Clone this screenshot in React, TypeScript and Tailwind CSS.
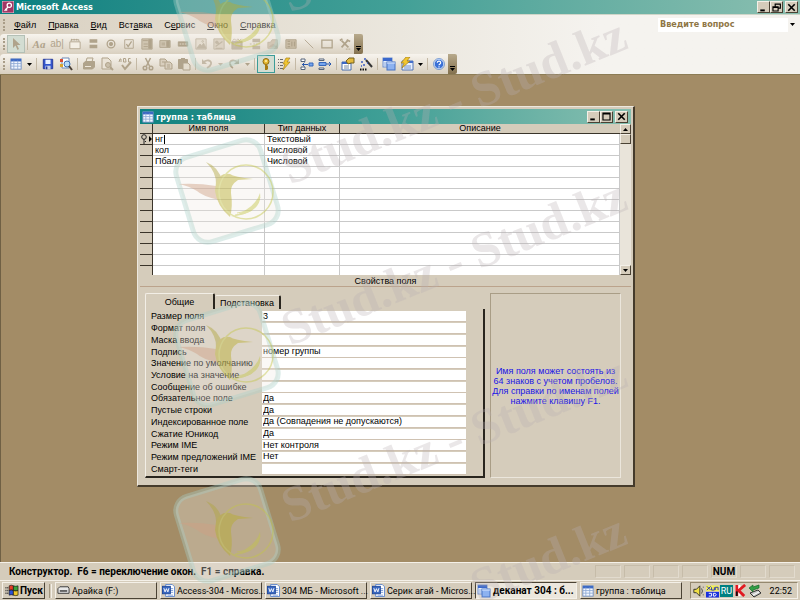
import type { ReactNode } from "react";

const raised =
  "border border-t-[#f4f0e8] border-l-[#f4f0e8] border-r-[#4a4234] border-b-[#4a4234] bg-[#d5ccbb]";

const MENU = [
  ["", "Ф", "айл"],
  ["", "П", "равка"],
  ["", "В", "ид"],
  ["Вст", "а", "вка"],
  ["С", "е", "рвис"],
  ["", "О", "кно"],
  ["", "С", "правка"],
];

const FIELDS = [
  { name: "нг", type: "Текстовый" },
  { name: "кол", type: "Числовой" },
  { name: "Пбалл", type: "Числовой" },
];

const PROPS = [
  ["Размер поля", "3"],
  ["Формат поля", ""],
  ["Маска ввода", ""],
  ["Подпись", "номер группы"],
  ["Значение по умолчанию", ""],
  ["Условие на значение", ""],
  ["Сообщение об ошибке", ""],
  ["Обязательное поле", "Да"],
  ["Пустые строки", "Да"],
  ["Индексированное поле", "Да (Совпадения не допускаются)"],
  ["Сжатие Юникод", "Да"],
  ["Режим IME", "Нет контроля"],
  ["Режим предложений IME", "Нет"],
  ["Смарт-теги", ""],
];

function Svg({ children, className = "w-[14px] h-[14px]" }: { children: ReactNode; className?: string }) {
  return (
    <svg viewBox="0 0 14 14" className={`shrink-0 ${className}`} fill="none" stroke="currentColor" aria-hidden="true">
      {children}
    </svg>
  );
}

function TableIcon() {
  return (
    <Svg className="w-3 h-3">
      <rect x="1" y="1" width="12" height="12" fill="#f4f8ff" stroke="#6a8ac0" />
      <path d="M1 2.500h12" stroke="#3d6ac4" strokeWidth="3" />
      <path d="M4.500 3v10M9 3v10M1 6.500h12M1 9.500h12" stroke="#8fabd6" />
    </Svg>
  );
}

function WordIcon() {
  return (
    <Svg className="w-[13px] h-[13px]">
      <path d="M4 .5h7l2.500 2.500v10.500H4z" fill="#fff" stroke="#5e86cc" />
      <path d="M9 5h3M9 7h3M9 9h3M6 12h6" stroke="#7c9cd6" />
      <rect x=".5" y="2.500" width="8.500" height="8" fill="#3b68c0" stroke="#204a9c" />
      <path d="M2 4.500l1.300 4L4.800 5l1.500 3.500 1.200-4" stroke="#fff" />
    </Svg>
  );
}

function DbIcon() {
  return (
    <Svg>
      <rect x="1" y="1" width="9" height="9" fill="#e6effc" stroke="#6c8fd0" />
      <path d="M1 2.500h9" stroke="#3a68cc" strokeWidth="3" />
      <path d="M2 6h3M2 8h3" stroke="#8caade" />
      <rect x="5" y="5" width="8" height="8" fill="#8db2f0" stroke="#4673c4" />
      <path d="M5 6h8" stroke="#dce8ff" />
    </Svg>
  );
}

function CloseIcon() {
  return (
    <Svg className="w-[9px] h-[9px] text-black">
      <path d="M2 2l10 10M12 2L2 12" strokeWidth="2.500" />
    </Svg>
  );
}

function MinIcon() {
  return (
    <Svg className="w-[9px] h-[9px] text-black">
      <path d="M2 11.500h7" strokeWidth="3" />
    </Svg>
  );
}

function Caret() {
  return (
    <svg viewBox="0 0 5 3" className="w-[5px] h-[3px] shrink-0" aria-hidden="true">
      <path d="M0 0h5L2.500 3z" fill="currentColor" />
    </svg>
  );
}

function ToolButton({ label, active, children }: { label: string; active?: string; children: ReactNode }) {
  return (
    <button
      type="button"
      aria-label={label}
      className={`w-[18px] h-[18px] shrink-0 flex items-center justify-center ${
        active ? `border bg-[#d3ddd2] ${active}` : ""
      }`}
    >
      {children}
    </button>
  );
}

function Drop({ label }: { label: string }) {
  return (
    <button type="button" aria-label={label} className="w-[9px] h-[18px] shrink-0 flex items-center justify-center">
      <Caret />
    </button>
  );
}

function Sep() {
  return <span className="w-px h-3 mx-0.5 shrink-0 bg-[#c4b9a5]" />;
}

function Grip() {
  return (
    <span className="w-[7px] shrink-0 flex items-center justify-center">
      <span className="h-3 border-l-2 border-dotted border-[#a99d88]" />
    </span>
  );
}

function Overflow({ label }: { label: string }) {
  return (
    <button
      type="button"
      aria-label={label}
      className="w-[9px] self-stretch rounded-r-xs flex flex-col items-center justify-end gap-px pb-[3px] bg-linear-to-b from-[#b8aa8c] to-[#84714e] text-black"
    >
      <span className="w-[5px] h-px bg-black" />
      <Caret />
    </button>
  );
}

const controls: [string, ReactNode][] = [
  ["Поле", <><path d="M2.500 4V2h9v2" /><path d="M1 4.500h12v8H1z" fill="#f4efe5" /><path d="M3 1v2M6 1v2M9 1v2" /></>],
  ["Выключатель", <><path d="M3 3.500h9M3 10h9" strokeWidth="4" /><path d="M3 6.500h9" stroke="#eee8db" /></>],
  ["Переключатель", <><circle cx="7" cy="7" r="4.500" strokeWidth="1.500" /><circle cx="7" cy="7" r="2" fill="currentColor" /></>],
  ["Флажок", <><path d="M2 2h10v10H2z" /><path d="M4 7l2 3 4-6" strokeWidth="1.500" /></>],
  ["Поле со списком", <><path d="M1 1h12v12H1z" fill="#cfc4b0" /><path d="M2 3h6M3 7h5M3 10h5" /><path d="M9 2h3v10H9z" fill="currentColor" /></>],
  ["Список", <><path d="M1 3h12v8H1z" fill="#cfc4b0" /><path d="M3 6h4M3 8h4" /><path d="M9 4h3v6H9z" fill="currentColor" /></>],
  ["Кнопка", <><path d="M1.500 4.500h11v5h-11z" fill="currentColor" /><path d="M3 7h8" stroke="#e8e0d0" strokeDasharray="2 1" /></>],
  ["Рисунок", <><path d="M1 1h12v12H1z" fill="#e0d8c8" /><path d="M2 12l4-5 2 2 2-3 3 6z" fill="currentColor" /><circle cx="9" cy="4" r="1" /></>],
  ["Свободная рамка", <><path d="M1 1h12v12H1z" fill="#d3c8b4" /><path d="M3 10l8-6M4 4l3 3M3 12h8" strokeWidth="1.500" /><circle cx="4.500" cy="5" r="1.500" fill="currentColor" /></>],
  ["Присоединенная рамка", <><path d="M1 4h12v9H1z" fill="currentColor" /><path d="M2 3l2-2 2 2 2-2 2 2 2-2M3 11l3-4 2 3 3-4" stroke="#b8a98e" /><path d="M3 7h8" stroke="#e0d7c6" /></>],
  ["Конец страницы", <><path d="M4 3h9M4 11h9" strokeWidth="4" /><path d="M1 7h2M5 7h8" strokeDasharray="2 1" /></>],
  ["Вкладки", <><path d="M1 5h3l2-3h6v10H1z" fill="#c4b69e" /><path d="M3 10l4-3 4 3z" fill="currentColor" /></>],
  ["Подчиненная форма", <><path d="M1 2h12v10H1z" fill="#cabda6" /><path d="M3 4h3M3 7h3M3 10h3M8 4v6M11 4v6" strokeWidth="1.500" /></>],
  ["Линия", <path d="M2 2l10 10" />],
  ["Прямоугольник", <path d="M1 2.500h12v9H1z" strokeWidth="1.500" />],
  ["Другие элементы", <><path d="M3 11l7-8M3 3l8 8" strokeWidth="2" /><path d="M1 3l3-2M9 2l4 2" strokeWidth="2" /><path d="M8 13h5" strokeDasharray="1 1" strokeWidth="1.500" /></>],
];

function ControlsToolbar() {
  return (
    <div className="w-fit h-5 flex items-center rounded-sm bg-linear-to-b from-[#f7f4ee] to-[#d9d0c0] text-[#b0a38b]">
      <Grip />
      <ToolButton label="Выбор объектов" active="border-[#b4c0b6]">
        <Svg><path d="M4 1v10l2.500-2.500L8.500 13l1.500-1-2-4h3.500z" fill="currentColor" stroke="none" /></Svg>
      </ToolButton>
      <Sep />
      <button type="button" className="w-[18px] text-[11px] leading-3 font-bold italic font-['Liberation_Serif',serif]">Aa</button>
      <button type="button" className="w-[18px] text-[10px] leading-3 font-['Liberation_Sans',sans-serif]">ab|</button>
      {controls.map(([label, icon]) => (
        <ToolButton key={label} label={label}>
          <Svg className="w-3 h-3">{icon}</Svg>
        </ToolButton>
      ))}
      <Overflow label="Параметры панели элементов" />
    </div>
  );
}

function DesignToolbar() {
  return (
    <div className="w-fit h-5 flex items-center rounded-sm bg-linear-to-b from-[#f7f4ee] to-[#d9d0c0] text-[#b0a38b]">
      <Grip />
      <ToolButton label="Вид"><TableIcon /></ToolButton>
      <span className="text-black"><Drop label="Выбрать вид" /></span>
      <Sep />
      <ToolButton label="Сохранить">
        <Svg className="w-3 h-3">
          <path d="M1.500 1.500h11v11h-11z" fill="#3355cc" stroke="#1c2f94" />
          <path d="M4 2h6v5H4z" fill="#e8f0ff" stroke="none" />
          <path d="M4 9h6v4H4z" fill="#c6cfe8" stroke="none" />
          <path d="M5.500 10v3" stroke="#1c2f94" strokeWidth="1.500" />
        </Svg>
      </ToolButton>
      <ToolButton label="Поиск файлов">
        <Svg>
          <path d="M3 1h7v10H3z" fill="#fff" stroke="#6c89b8" />
          <path d="M1 2h3v3H1z" fill="#d84b34" stroke="none" />
          <path d="M1 7h3v3H1z" fill="#d9a52f" stroke="none" />
          <circle cx="8" cy="7" r="3" fill="#b9dcf8" stroke="#3c6fb4" />
          <path d="M10 9l3 4" stroke="#4c4238" strokeWidth="2" />
        </Svg>
      </ToolButton>
      <Sep />
      <ToolButton label="Печать">
        <Svg>
          <path d="M4 5l1-4h6l-1 4" fill="#efe9dd" />
          <path d="M1.500 6l2-1.500h9V10l-2 2h-9z" fill="currentColor" />
          <path d="M3 9.500h6" stroke="#eee7da" />
        </Svg>
      </ToolButton>
      <ToolButton label="Просмотр">
        <Svg>
          <path d="M2 1h6l3 3v8H2z" fill="#eae3d6" />
          <circle cx="8" cy="8" r="2.500" fill="#cabfab" />
          <path d="M10 10l3 3" strokeWidth="2" />
        </Svg>
      </ToolButton>
      <ToolButton label="Орфография">
        <Svg>
          <path d="M1 5l1-3h1v3M5.500 5V1.500H7.500L8 5H5.500M12.500 1.500h-2V5h2" />
          <path d="M4 8l3 4 6-7" strokeWidth="2" />
        </Svg>
      </ToolButton>
      <Sep />
      <ToolButton label="Вырезать">
        <Svg>
          <path d="M4.500 1l4 8M9.500 1l-4 8" strokeWidth="1.500" />
          <circle cx="4" cy="11" r="1.800" strokeWidth="1.500" />
          <circle cx="10" cy="11" r="1.800" strokeWidth="1.500" />
        </Svg>
      </ToolButton>
      <ToolButton label="Копировать">
        <Svg>
          <path d="M1 2h5l2 2v5H1z" fill="#d8cebd" />
          <path d="M6 5h5l2 2v5H6z" fill="#d8cebd" />
          <path d="M3 5h3M8 8h3M8 10h3" />
        </Svg>
      </ToolButton>
      <ToolButton label="Вставить">
        <Svg>
          <path d="M1.500 2.500h9v9h-9z" fill="currentColor" />
          <path d="M4 2h4" strokeWidth="2" />
          <path d="M6 6h5l2 2v5H6z" fill="#e4dccd" />
        </Svg>
      </ToolButton>
      <Sep />
      <ToolButton label="Отменить">
        <Svg>
          <path d="M3 6c3-4 9-3 8 1-.5 2-2 3-4 4" strokeWidth="1.800" />
          <path d="M2 2v5h5z" fill="currentColor" stroke="none" />
        </Svg>
      </ToolButton>
      <Drop label="Список отмены" />
      <ToolButton label="Вернуть">
        <Svg>
          <path d="M11 6C8 2 2 3 3 7c.5 2 1 3 3 4" strokeWidth="1.800" />
          <path d="M12 2v5H7z" fill="currentColor" stroke="none" />
        </Svg>
      </ToolButton>
      <Drop label="Список возврата" />
      <Sep />
      <ToolButton label="Ключевое поле" active="border-[#3b9c98]">
        <Svg>
          <circle cx="7" cy="4.500" r="3" fill="#e8bc36" stroke="#8b6914" />
          <path d="M7 7v6M7 9.500h2M7 11.500h2" stroke="#a67c14" strokeWidth="2" />
          <circle cx="7" cy="4" r="1" fill="#fff3b0" stroke="none" />
        </Svg>
      </ToolButton>
      <ToolButton label="Индексы">
        <Svg>
          <path d="M1 2.500h5M1 5.500h5M1 8.500h5M1 11.500h5" stroke="#6b6b6b" strokeDasharray="1 1 3 0" />
          <path d="M9 1h4l-3 4h3L6 13l2-6H6z" fill="#f2c62e" stroke="#a88222" strokeWidth=".7" />
        </Svg>
      </ToolButton>
      <Sep />
      <ToolButton label="Добавить строки">
        <Svg>
          <path d="M1 2h4v2.500H1zM1 10h4v2.500H1z" fill="#fff" stroke="#56657a" />
          <path d="M9 6h4v3H9z" fill="#77a6ee" stroke="#3668bb" />
          <path d="M8 7.500H2M4.500 5.500l-2 2 2 2" stroke="#2857ac" />
        </Svg>
      </ToolButton>
      <ToolButton label="Удалить строки">
        <Svg>
          <path d="M1 2h5v1.500H1zM1 11h5v1.500H1z" fill="#fff" stroke="#56657a" />
          <path d="M1 5.500h7v3H1z" fill="#77a6ee" stroke="#3668bb" />
          <path d="M8 7h5M11 5l2 2-2 2" stroke="#2857ac" />
        </Svg>
      </ToolButton>
      <Sep />
      <ToolButton label="Свойства">
        <Svg>
          <path d="M1 5h9v8H1z" fill="#fff" stroke="#476dae" />
          <path d="M1 6h9" stroke="#3a66c6" strokeWidth="2" />
          <path d="M3 9h5M3 11h5" stroke="#7b8ca5" />
          <path d="M5 4l3-3h5v5h-3L7 7z" fill="#e3b93d" stroke="#74601e" />
        </Svg>
      </ToolButton>
      <ToolButton label="Построить">
        <Svg>
          <path d="M7 3l6 7" stroke="#333" strokeWidth="2" />
          <path d="M2 5h2M5 2h2M4 8h2M8 6h1M2 9h1" stroke="#3e5dc1" strokeWidth="1.500" />
          <path d="M1 12.500h7" stroke="#111" strokeWidth="1.800" strokeDasharray="1.500 1" />
        </Svg>
      </ToolButton>
      <Sep />
      <ToolButton label="Окно базы данных"><DbIcon /></ToolButton>
      <ToolButton label="Новый объект">
        <Svg>
          <path d="M2 4h11v9H2z" fill="#e8f0ff" stroke="#5577b7" />
          <path d="M2 5h11" stroke="#4470cc" strokeWidth="2" />
          <path d="M4 9h7M4 11h7" stroke="#7493ce" />
          <path d="M6 0h4L7 4h3L2 11l2-5H1z" fill="#f2c62e" stroke="#a17c20" strokeWidth=".7" />
        </Svg>
      </ToolButton>
      <span className="text-black"><Drop label="Выбрать объект" /></span>
      <Sep />
      <ToolButton label="Справка">
        <Svg className="w-3 h-3">
          <circle cx="7" cy="7" r="5.500" fill="#3a70d6" stroke="#c5d9fa" />
          <circle cx="7" cy="7" r="6.500" stroke="#467bcd" strokeWidth=".7" />
          <path d="M5 5.500c0-2.500 4-2.500 4 0C9 7 7 7 7 8.500M7 9.500v1.500" stroke="#fff" strokeWidth="1.300" />
        </Svg>
      </ToolButton>
      <Overflow label="Параметры панели конструктора" />
    </div>
  );
}

function CaptionButton({ label, children }: { label: string; children: ReactNode }) {
  return (
    <button type="button" aria-label={label} className={`w-[13px] h-3 flex items-center justify-center ${raised}`}>
      {children}
    </button>
  );
}

function DesignGrid() {
  return (
    <div className="flex h-[151px]">
      <div className="flex-1 overflow-hidden bg-white">
        <table className="w-full table-fixed border-separate border-spacing-0">
          <colgroup>
            <col className="w-[13px]" />
            <col className="w-28" />
            <col className="w-[75px]" />
            <col />
          </colgroup>
          <thead>
            <tr className="h-[10px] bg-[#d5ccbb] text-[9px] leading-[9px]">
              <th className="p-0 border-b border-r border-[#3a342a]" aria-label="Маркер" />
              <th className="p-0 font-normal border-b border-r border-[#3a342a]">Имя поля</th>
              <th className="p-0 font-normal border-b border-r border-[#3a342a]">Тип данных</th>
              <th className="p-0 font-normal border-b border-[#3a342a]">Описание</th>
            </tr>
          </thead>
          <tbody>
            {Array.from({ length: 13 }, (_, i) => (
              <tr key={i} className="h-[11px] text-[9px] leading-[10px]">
                <td className="p-0 bg-[#d5ccbb] border-b border-r border-[#3a342a]">
                  {i === 0 && (
                    <svg viewBox="0 0 12 10" className="block w-3 h-[10px]" aria-hidden="true">
                      <circle cx="4" cy="3" r="2.300" fill="none" stroke="#222" />
                      <path d="M4 5v5M5 7.500h1" stroke="#222" />
                      <path d="M9 2v6l3-3z" fill="#000" />
                    </svg>
                  )}
                </td>
                <td className="p-0 pl-0.5 border-b border-r border-[#c9c9c9]">
                  {i === 0 ? (
                    <span className="flex items-center">
                      <input
                        aria-label="Имя поля 1"
                        defaultValue={FIELDS[0].name}
                        className="w-[9px] h-[10px] p-0 bg-transparent outline-none"
                      />
                      <span className="w-px h-[9px] bg-black" />
                    </span>
                  ) : (
                    FIELDS[i]?.name
                  )}
                </td>
                <td className="p-0 pl-0.5 border-b border-r border-[#c9c9c9]">{FIELDS[i]?.type}</td>
                <td className="p-0 border-b border-r border-[#c9c9c9]" />
              </tr>
            ))}
          </tbody>
        </table>
      </div>
      <div className="w-[11px] flex flex-col bg-[#e9e4da]">
        <button type="button" aria-label="Вверх" className={`h-[10px] flex items-center justify-center ${raised}`}>
          <span className="rotate-180 flex"><Caret /></span>
        </button>
        <div className={`h-[10px] ${raised}`} />
        <button type="button" aria-label="Вниз" className={`h-[10px] mt-auto flex items-center justify-center ${raised}`}>
          <Caret />
        </button>
      </div>
    </div>
  );
}

function FieldProperties() {
  return (
    <div className="flex-1 flex pt-[6px] pl-[5px] pr-[10px] pb-[5px] gap-[5px]">
      <div className="flex-1 flex flex-col">
        <div role="tablist" className="flex items-end h-4">
          <button
            type="button"
            role="tab"
            aria-selected="true"
            className="w-[70px] h-4 border-t border-l border-[#f2eee6] border-r-2 border-r-[#29251e] rounded-t-xs text-[9px] leading-3"
          >
            Общие
          </button>
          <button
            type="button"
            role="tab"
            aria-selected="false"
            className="w-[66px] h-[14px] border-t border-[#f2eee6] border-r-2 border-r-[#29251e] rounded-t-xs text-[9px] leading-3"
          >
            Подстановка
          </button>
        </div>
        <div className="flex-1 flex flex-col pl-[5px] pr-[17px] pb-px pt-[2px] border-l border-l-[#f2eee6] border-r-2 border-b-2 border-r-[#29251e] border-b-[#29251e]">
          {PROPS.map(([label, value], i) => (
            <div key={label} className="flex-1 flex items-center text-[9px] leading-[11px]">
              <label htmlFor={`prop${i}`} className="w-[111px] whitespace-nowrap">
                {label}
              </label>
              <input
                id={`prop${i}`}
                defaultValue={value}
                className="flex-1 min-w-0 h-[11px] p-0 pl-px bg-white outline-none border-b border-[#cfc2b2]"
              />
            </div>
          ))}
        </div>
      </div>
      <p className="w-[131px] flex items-center justify-center text-center whitespace-pre text-[9px] leading-[10px] text-[#1a14e6] border border-t-[#a99d86] border-l-[#a99d86] border-r-[#ebe6dc] border-b-[#ebe6dc]">
        {"Имя поля может состоять из\n64 знаков с учетом пробелов.\nДля справки по именам полей\nнажмите клавишу F1."}
      </p>
    </div>
  );
}

function TableWindow() {
  return (
    <section className="absolute left-[136px] top-[31px] w-[498px] h-[381px] flex flex-col p-[2px] bg-[#d5ccbb] border border-t-[#ede8de] border-l-[#ede8de] border-r-2 border-b-2 border-r-[#453b2b] border-b-[#453b2b]">
      <header className="h-[15px] shrink-0 flex items-center pl-[2px] pr-[3px] gap-[2px] text-white bg-linear-to-r from-[#0c8280] via-[#3f9f96] to-[#86bfb0]">
        <TableIcon />
        <h2 className="flex-1 text-[9px] leading-3 font-bold font-['DejaVu_Sans_Condensed',sans-serif]">группа : таблица</h2>
        <div className="flex">
          <CaptionButton label="Свернуть окно"><MinIcon /></CaptionButton>
          <CaptionButton label="Развернуть окно">
            <Svg className="w-[9px] h-[9px] text-black">
              <path d="M1.500 1.500h11v11h-11zM1 3h12" strokeWidth="1.800" />
            </Svg>
          </CaptionButton>
          <span className="w-0.5" />
          <CaptionButton label="Закрыть окно"><CloseIcon /></CaptionButton>
        </div>
      </header>
      <DesignGrid />
      <h3 className="h-3 shrink-0 text-center text-[9px] leading-3 border-b border-[#bba38c]">Свойства поля</h3>
      <FieldProperties />
    </section>
  );
}

function TaskButton({ icon, label, active }: { icon: ReactNode; label: string; active?: boolean }) {
  return (
    <button
      type="button"
      className={`flex-1 min-w-0 max-w-[102px] h-[17px] px-px flex items-center gap-0.5 leading-3 border ${
        active
          ? "text-[10px] font-bold bg-[#ece7dd] border-t-[#4a4234] border-l-[#4a4234] border-r-[#f4f0e8] border-b-[#f4f0e8]"
          : "text-[9px] bg-[#d5ccbb] border-t-[#f4f0e8] border-l-[#f4f0e8] border-r-[#4a4234] border-b-[#4a4234]"
      }`}
    >
      {icon}
      <span className="whitespace-nowrap">{label}</span>
    </button>
  );
}

function Taskbar() {
  return (
    <footer className="h-5 shrink-0 flex items-center pl-0.5 pr-0.5 border-t border-[#f4f0e8] bg-[#d5ccbb] font-['Roboto',sans-serif]">
      <button type="button" className={`w-[43px] h-[17px] pl-[2px] flex items-center gap-px text-[10px] font-bold ${raised}`}>
        <Svg className="w-[14px] h-[13px]">
          <path d="M0 4h3M0 7h3M0 10h3" stroke="#222" strokeWidth="1.500" strokeDasharray="1 1" />
          <path d="M4 2q2-1.500 4.500 0v5Q6 6 4 7z" fill="#e33d26" stroke="#111" strokeWidth=".7" />
          <path d="M8.500 2Q11 3 13.500 2v5q-2.500 1-5 0z" fill="#3aa13a" stroke="#111" strokeWidth=".7" />
          <path d="M4 7q2-1 4.500 0v5Q6 11 4 12z" fill="#2b50d8" stroke="#111" strokeWidth=".7" />
          <path d="M8.500 7q2.500 1 5 0v5q-2.500 1-5 0z" fill="#eec72a" stroke="#111" strokeWidth=".7" />
        </Svg>
        Пуск
      </button>
      <span className="w-[3px] h-[14px] ml-[4px] mr-[3px] border-l border-r border-l-[#a2967f] border-r-[#f4f0e8]" />
      <nav className="flex-1 min-w-0 flex gap-[3px]" aria-label="Окна">
        <TaskButton
          label="Арайка (F:)"
          icon={
            <Svg className="w-[13px] h-[13px]">
              <path d="M1 5l2-2h9l1 2v5H1z" fill="#e8e8e8" stroke="#333" />
              <path d="M3 7.500h8" stroke="#333" strokeWidth="1.500" />
            </Svg>
          }
        />
        <TaskButton icon={<WordIcon />} label="Access-304 - Micros..." />
        <TaskButton icon={<WordIcon />} label="304 МБ - Microsoft ..." />
        <TaskButton icon={<WordIcon />} label="Серик агай - Micros..." />
        <TaskButton icon={<DbIcon />} label="деканат 304 : б..." active />
        <TaskButton icon={<TableIcon />} label="группа : таблица" />
      </nav>
      <div className="w-[108px] h-[17px] pl-0.5 pr-[5px] flex items-center gap-px border border-t-[#94886f] border-l-[#94886f] border-r-[#f4f0e8] border-b-[#f4f0e8]">
        <Svg className="w-3 h-[14px]">
          <path d="M1 5h3l4-4v12L4 9H1z" fill="#f0df45" stroke="#222" />
          <path d="M10 4q2 3 0 6M12 2v1M12 11v1" stroke="#333" />
        </Svg>
        <Svg className="w-[13px] h-[14px]">
          <path d="M0 1h14v6H0z" fill="#f2ef55" stroke="none" />
          <path d="M1 2l4 4M5 2L1 6M6 3v3h3V3M10 6V3h3v3" stroke="#2632b4" />
          <path d="M0 8h14v6H0z" fill="#1b31dc" stroke="none" />
          <path d="M3 9.500h3v3H3M8 9.500h2l1 1.500-1 1.500H8z" stroke="#fff" />
        </Svg>
        <span className="w-[13px] h-3 text-center text-[9px] leading-3 text-white bg-[#008080]">RU</span>
        <Svg className="w-[13px] h-[13px]">
          <path d="M1 1h6v12H1z" fill="#fff" stroke="none" />
          <path d="M3 1v12M12 1L5 7l6 6" stroke="#e11a22" strokeWidth="3" />
          <path d="M3 8v5" stroke="#111" strokeWidth="2" />
        </Svg>
        <Svg>
          <path d="M2 9l8-3 3 3-7 4z" fill="#c9c9c9" stroke="#333" />
          <path d="M5 11l6-3" stroke="#fff" />
          <path d="M1 4l4-3v2l6-2v3L5 6v2z" fill="#31a045" stroke="#17652a" strokeWidth=".7" />
        </Svg>
        <time className="ml-auto text-[9px] leading-3">22:52</time>
      </div>
    </footer>
  );
}

function Logo({ y }: { y: number }) {
  return (
    <g transform={`translate(227 ${y})`}>
      <rect
        x="-44" y="-44" width="88" height="88" rx="15" transform="rotate(-17)"
        fill="#efe9e4" fillOpacity=".32" stroke="#a8cfc9" strokeOpacity=".38" strokeWidth="5"
      />
      <g opacity=".45">
        <path d="M-48-7Q-28-8-11-5L-8 9Q-25 5-30 0-38-5-48-7z" fill="#cfa085" />
        <path d="M-21-29Q-8-24-5-10l-6 4q1-12-10-23z" fill="#b0a63f" />
        <path d="M-11-8Q-7-19 3-17q4 3 23 5L11-11Q3-6 4 2q2 14-1 24Q-10 15-12 0z" fill="#b8ad2c" />
        <circle cx="19" cy="1" r="27" fill="none" stroke="#c4c648" strokeWidth="1.500" />
        <path d="M33 2Q36 22 4 26 29 17 33 2z" fill="#c4c648" />
        <path d="M31 10Q27 23 8 24M33 6Q30 20 10 22" fill="none" stroke="#c4c648" />
      </g>
    </g>
  );
}

const stamps = [
  { x: 290, y: 13, text: "S" },
  { x: 290, y: 185, text: "Stud.kz - Stud.kz" },
  { x: 290, y: 346, text: "Stud.kz - Stud.kz" },
  { x: 290, y: 523, text: "Stud.kz - Stud.kz" },
  { x: 479, y: 604, text: "Stud.kz" },
];

// Logo and text stamp repeated over the whole screen
function Watermark() {
  return (
    <svg className="absolute inset-0 w-full h-full pointer-events-none" aria-hidden="true">
      {[19, 191, 354, 530].map((y) => (
        <Logo key={y} y={y} />
      ))}
      {stamps.map(({ x, y, text }) => (
        <text
          key={y}
          transform={`translate(${x} ${y}) rotate(-22)`}
          className="text-[50px] font-bold font-['Liberation_Serif',serif]"
          fill="#b9aeb2"
          fillOpacity=".3"
        >
          {text}
        </text>
      ))}
    </svg>
  );
}

export default function App() {
  return (
    <div className="relative min-h-screen flex flex-col overflow-hidden bg-[#d5ccbb] text-black font-['Liberation_Sans',sans-serif]">
      <header className="h-[15px] shrink-0 flex items-center pl-0.5 pr-0.5 gap-[2px] text-white bg-linear-to-r from-[#078080] via-[#42a097] to-[#8abfb0] border-b border-[#cfd5c8]">
        <Svg className="w-3 h-3">
          <path d="M0 0h14v14H0z" fill="#a13664" stroke="#f0dce6" />
          <circle cx="8.500" cy="5" r="2.500" stroke="#fff" strokeWidth="1.500" />
          <path d="M7 7l-4 4.500M4 9l2 2" stroke="#fff" strokeWidth="1.500" />
        </Svg>
        <h1 className="flex-1 text-[9px] leading-3 font-bold font-['DejaVu_Sans_Condensed',sans-serif]">Microsoft Access</h1>
        <div className="flex">
          <CaptionButton label="Свернуть"><MinIcon /></CaptionButton>
          <CaptionButton label="Восстановить">
            <Svg className="w-[9px] h-[9px] text-black">
              <path d="M5 5V1.500h8V8h-3M4 2h9M1.500 6h8v6.500h-8zM1 7h9" strokeWidth="1.800" />
            </Svg>
          </CaptionButton>
          <span className="w-0.5" />
          <CaptionButton label="Закрыть"><CloseIcon /></CaptionButton>
        </div>
      </header>

      <div className="h-[60px] shrink-0 bg-linear-to-r from-[#d9d0c0] via-[#ebe7de] via-50% to-[#f5f3ef] to-75% border-b border-[#8c7c55]">
        <div className="h-[19px] flex items-center pr-[3px]">
          <Grip />
          <nav className="flex-1 flex gap-3 pl-[7px] text-[9px] leading-3" aria-label="Меню">
            {MENU.map(([a, key, b]) => (
              <button key={a + key + b} type="button">
                {a}
                <span className="underline">{key}</span>
                {b}
              </button>
            ))}
          </nav>
          <div className="w-[139px] h-[14px] flex items-center bg-white">
            <input
              aria-label="Введите вопрос"
              placeholder="Введите вопрос"
              className="flex-1 min-w-0 h-3 pl-0.5 text-[9px] font-bold font-['DejaVu_Sans_Condensed',sans-serif] outline-none placeholder:text-[#8f7645]"
            />
            <span className="h-[14px] flex items-center bg-[#f5f3ef]"><Drop label="Список вопросов" /></span>
          </div>
        </div>
        <ControlsToolbar />
        <DesignToolbar />
      </div>

      <main className="relative flex-1 bg-[#a38c66] border-l border-[#6f6044]">
        <TableWindow />
      </main>

      <div className="h-[18px] shrink-0 flex items-center pl-[9px] pr-[5px] gap-[3px] border-t border-[#f4f0e8] text-[10px] leading-3 font-bold font-['Roboto',sans-serif]">
        <p className="flex-1 whitespace-pre">Конструктор.  F6 = переключение окон.  F1 = справка.</p>
        {["", "", "", "", "NUM", "", ""].map((s, i) => (
          <span key={i} className="w-[26px] h-[13px] text-center border border-t-[#c6bca9] border-l-[#c6bca9] border-r-[#e2dbce] border-b-[#e2dbce]">
            {s}
          </span>
        ))}
      </div>
      <Taskbar />
      <Watermark />
    </div>
  );
}
